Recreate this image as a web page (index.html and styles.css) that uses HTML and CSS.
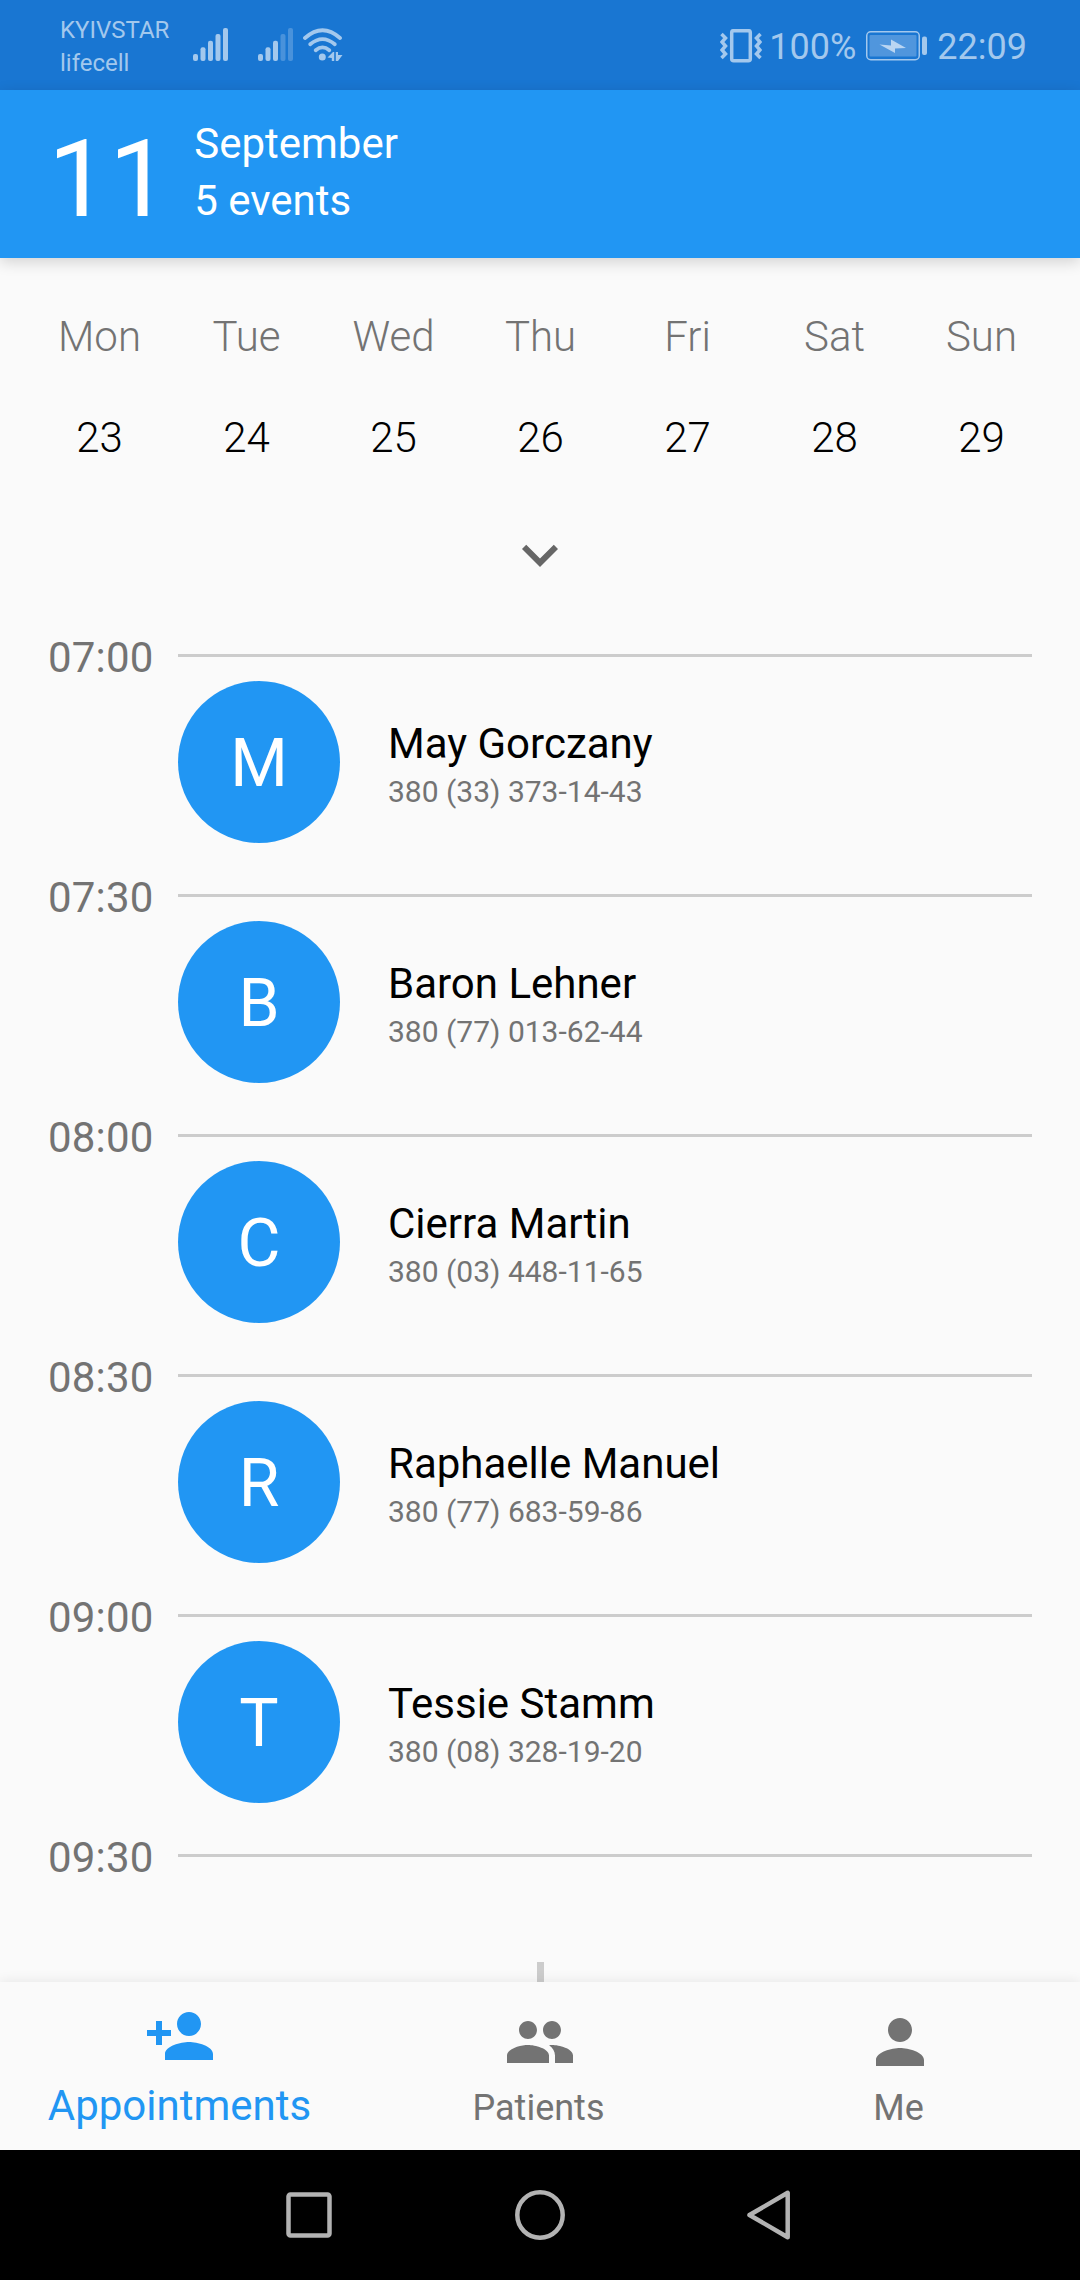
FILE: index.html
```html
<!DOCTYPE html>
<html lang="en">
<head>
<meta charset="utf-8">
<title>Appointments</title>
<link rel="stylesheet" href="styles.css">
</head>
<body>
<div class="screen">
  <header class="status">
    <div class="carriers"><span>KYIVSTAR</span><span>lifecell</span></div>
    <svg class="signal" width="34" height="33" viewBox="0 0 34 33"><g fill="currentColor"><rect x="0" y="26" width="5" height="7" rx="2"/><rect x="7.5" y="19.300" width="5" height="13.700" rx="2"/><rect x="15" y="12.700" width="5" height="20.300" rx="2"/><rect x="22.500" y="6" width="5" height="27" rx="2"/><rect x="30" y="0" width="5" height="33" rx="2"/></g></svg>
    <svg class="signal signal-second" width="35" height="33" viewBox="0 0 35 33"><g fill="currentColor"><rect x="0" y="26" width="5" height="7" rx="2"/><rect x="7.500" y="19.300" width="5" height="13.700" rx="2"/><rect x="15" y="12.700" width="5" height="20.300" rx="2"/><rect x="22.500" y="6" width="5" height="27" rx="2" opacity=".35"/><rect x="30" y="0" width="5" height="33" rx="2" opacity=".35"/></g></svg>
    <svg class="wifi" width="40" height="34" viewBox="0 0 40 34"><g fill="none" stroke="currentColor" stroke-width="3.800" stroke-linecap="round"><path d="M2 10Q19.500-5.500 37 10"/><path d="M7.200 16.300Q19.500 6 31.800 16.300"/><path d="M12.700 22.300Q19.500 16.500 26.300 22.300"/></g><circle cx="19.300" cy="29" r="3.500" fill="currentColor"/><path fill="currentColor" d="M24.500 29.500L30 24h1.200v9h-2.400v-3zM32.800 24h2.200v3h4.500L35 33h-2.200z"/></svg>
    <div class="status-right">
      <svg width="42" height="34" viewBox="0 0 42 34"><g fill="none" stroke="currentColor" stroke-width="3.500"><rect x="11.700" y="1.700" width="18.600" height="30" rx="2"/><path d="M1.500 5l4 4-3.500 4 3.500 4-3.500 4L5.500 25l-4 4M40.500 5l-4 4 3.500 4-3.500 4 3.500 4L36.500 25l4 4"/></g></svg>
      <span class="percent">100%</span>
      <svg class="battery" width="61" height="30" viewBox="0 0 61 30"><rect x=".75" y=".75" width="52.500" height="28" rx="4" fill="none" stroke="currentColor" stroke-width="1.500"/><rect x="3.500" y="4" width="47" height="21.500" rx="1" fill="currentColor" opacity=".4"/><path fill="#b9d5f2" d="M13.500 13.500L25 14.500v-6L40 17l-11 .5v4.500z"/><rect x="56" y="5.500" width="5" height="18.500" rx="2" fill="currentColor"/></svg>
      <span class="clock">22:09</span>
    </div>
  </header>

  <section class="appbar">
    <div class="day-number">11</div>
    <div class="day-info"><div>September</div><div>5 events</div></div>
  </section>

  <main class="content">
    <div class="week">
      <span>Mon</span><span>Tue</span><span>Wed</span><span>Thu</span><span>Fri</span><span>Sat</span><span>Sun</span>
    </div>
    <div class="week dates">
      <span>23</span><span>24</span><span>25</span><span>26</span><span>27</span><span>28</span><span>29</span>
    </div>
    <div class="expand"><svg width="72" height="72" viewBox="0 0 24 24"><path fill="currentColor" d="M7.410 8.590L12 13.170l4.590-4.580L18 10l-6 6-6-6z"/></svg></div>

    <div class="agenda">
      <div class="slot"><div class="time">07:00</div><div class="slot-body"><div class="patient"><div class="avatar">M</div><div><div class="name">May Gorczany</div><div class="phone">380 (33) 373-14-43</div></div></div></div></div>
      <div class="slot"><div class="time">07:30</div><div class="slot-body"><div class="patient"><div class="avatar">B</div><div><div class="name">Baron Lehner</div><div class="phone">380 (77) 013-62-44</div></div></div></div></div>
      <div class="slot"><div class="time">08:00</div><div class="slot-body"><div class="patient"><div class="avatar">C</div><div><div class="name">Cierra Martin</div><div class="phone">380 (03) 448-11-65</div></div></div></div></div>
      <div class="slot"><div class="time">08:30</div><div class="slot-body"><div class="patient"><div class="avatar">R</div><div><div class="name">Raphaelle Manuel</div><div class="phone">380 (77) 683-59-86</div></div></div></div></div>
      <div class="slot"><div class="time">09:00</div><div class="slot-body"><div class="patient"><div class="avatar">T</div><div><div class="name">Tessie Stamm</div><div class="phone">380 (08) 328-19-20</div></div></div></div></div>
      <div class="slot slot-last"><div class="time">09:30</div><div class="slot-body"></div></div>
    </div>
    <div class="stem"></div>
  </main>

  <nav class="tabs">
    <div class="tab active"><svg width="72" height="72" viewBox="0 0 24 24"><path fill="currentColor" d="M15 12c2.210 0 4-1.790 4-4s-1.790-4-4-4-4 1.790-4 4 1.790 4 4 4zm-9-2V7H4v3H1v2h3v3h2v-3h3v-2H6zm9 4c-2.670 0-8 1.340-8 4v2h16v-2c0-2.660-5.330-4-8-4z"/></svg><span>Appointments</span></div>
    <div class="tab"><svg width="72" height="72" viewBox="0 0 24 24"><path fill="currentColor" d="M16 11c1.660 0 2.990-1.340 2.990-3S17.660 5 16 5c-1.660 0-3 1.340-3 3s1.340 3 3 3zm-8 0c1.660 0 2.990-1.340 2.990-3S9.660 5 8 5C6.340 5 5 6.340 5 8s1.340 3 3 3zm0 2c-2.330 0-7 1.170-7 3.500V19h14v-2.500c0-2.330-4.670-3.500-7-3.500zm8 0c-.29 0-.62.020-.97.050 1.160.84 1.970 1.970 1.970 3.450V19h6v-2.500c0-2.330-4.670-3.500-7-3.500z"/></svg><span>Patients</span></div>
    <div class="tab"><svg width="72" height="72" viewBox="0 0 24 24"><path fill="currentColor" d="M12 12c2.210 0 4-1.790 4-4s-1.790-4-4-4-4 1.790-4 4 1.790 4 4 4zm0 2c-2.670 0-8 1.340-8 4v2h16v-2c0-2.660-5.330-4-8-4z"/></svg><span>Me</span></div>
  </nav>

  <footer class="system-nav">
    <svg width="52" height="52" viewBox="0 0 52 52"><rect x="5.500" y="5.500" width="41" height="41" rx="2"/></svg>
    <svg width="52" height="52" viewBox="0 0 52 52"><circle cx="26" cy="26" r="22.700"/></svg>
    <svg width="52" height="52" viewBox="0 0 52 52"><path d="M42.700 3.800V48.200L4.500 26z"/></svg>
  </footer>
</div>
</body>
</html>
```
FILE: styles.css
```css
* { box-sizing: border-box; }

body {
  margin: 0;
  background: #fafafa;
  font-family: Roboto, sans-serif;
}

svg { display: block; flex: none; }

.screen {
  display: flex;
  flex-direction: column;
  width: 1080px;
  height: 2280px;
  overflow: hidden;
}

/* System status bar */
.status {
  display: flex;
  align-items: flex-start;
  height: 90px;
  flex: none;
  padding: 0 53px 0 60px;
  background: #1976d2;
  color: #a3c8ed;
}

.carriers {
  display: flex;
  flex-direction: column;
  width: 133px;
  padding-top: 14px;
  font-size: 24px;
  line-height: 33px;
}

.signal { margin-top: 28px; overflow: visible; }
.signal-second { margin-left: 31px; }
.wifi { margin: 28px 0 0 10px; }

.status-right {
  display: flex;
  align-items: flex-start;
  margin-left: auto;
  font-size: 36px;
  line-height: 36px;
}

.status-right svg { margin-top: 29px; }
.percent { margin: 29px 0 0 7px; }
.status-right .battery { margin: 31px 0 0 10px; }
.clock { margin: 29px 0 0 10px; }

/* Date header */
.appbar {
  position: relative;
  z-index: 1;
  display: flex;
  flex: none;
  gap: 24px;
  height: 168px;
  padding-left: 48px;
  background: #2196f3;
  color: #fff;
  box-shadow: 0 4px 14px rgba(0, 0, 0, .16);
}

.day-number {
  padding-top: 26px;
  font-size: 108px;
  line-height: 126px;
  letter-spacing: .4px;
}

.day-info {
  padding-top: 25px;
  font-size: 42px;
  line-height: 57px;
}

/* Week strip */
.content {
  flex: 1;
  min-height: 0;
  overflow: hidden;
}

.week {
  display: grid;
  grid-template-columns: repeat(7, 1fr);
  padding: 54px 25px 0 26px;
  color: #737373;
  font-size: 42px;
  font-weight: 300;
  line-height: 50px;
  text-align: center;
}

.week.dates { padding-top: 51px; color: #000; }

.expand {
  display: flex;
  justify-content: center;
  padding: 56px 0 39px;
  color: #666;
}

/* Agenda */
.slot {
  display: flex;
  height: 240px;
  padding: 0 48px;
}

.slot-last { height: 132px; }

.time {
  width: 130px;
  color: #737373;
  font-size: 42px;
  line-height: 56px;
  letter-spacing: .2px;
}

.slot-body {
  flex: 1;
  height: 3px;
  margin-top: 24px;
  background: #ccc;
}

.patient {
  display: flex;
  align-items: center;
  gap: 48px;
  padding-top: 27px;
}

.avatar {
  display: flex;
  align-items: center;
  justify-content: center;
  width: 162px;
  height: 162px;
  padding-top: 2px;
  border-radius: 50%;
  background: #2196f3;
  color: #fff;
  font-size: 66px;
}

.name {
  padding-top: 5px;
  color: #000;
  font-size: 42px;
  line-height: 48px;
}

.phone {
  padding-top: 6px;
  color: #737373;
  font-size: 30px;
  line-height: 36px;
}

.stem {
  width: 7px;
  height: 40px;
  margin-left: 537px;
  background: #ccc;
}

/* Bottom tabs */
.tabs {
  position: relative;
  display: grid;
  grid-template-columns: repeat(3, 1fr);
  flex: none;
  height: 168px;
  background: #fafafa;
  box-shadow: 0 0 12px rgba(0, 0, 0, .09);
}

.tab {
  display: flex;
  flex-direction: column;
  align-items: center;
  padding-top: 24px;
  color: #737373;
  font-size: 36px;
  line-height: 50px;
}

.tab span { padding: 5px 3px 0 0; }

.tab.active {
  padding-top: 18px;
  color: #2196f3;
  font-size: 42px;
}

.tab.active span { padding: 9px 1px 0 0; }

/* System navigation */
.system-nav {
  position: relative;
  display: flex;
  align-items: center;
  justify-content: center;
  gap: 179px;
  flex: none;
  height: 130px;
  background: #000;
}

.system-nav svg {
  fill: none;
  stroke: #b3b3b3;
  stroke-width: 4.5;
  stroke-linejoin: round;
}
```
